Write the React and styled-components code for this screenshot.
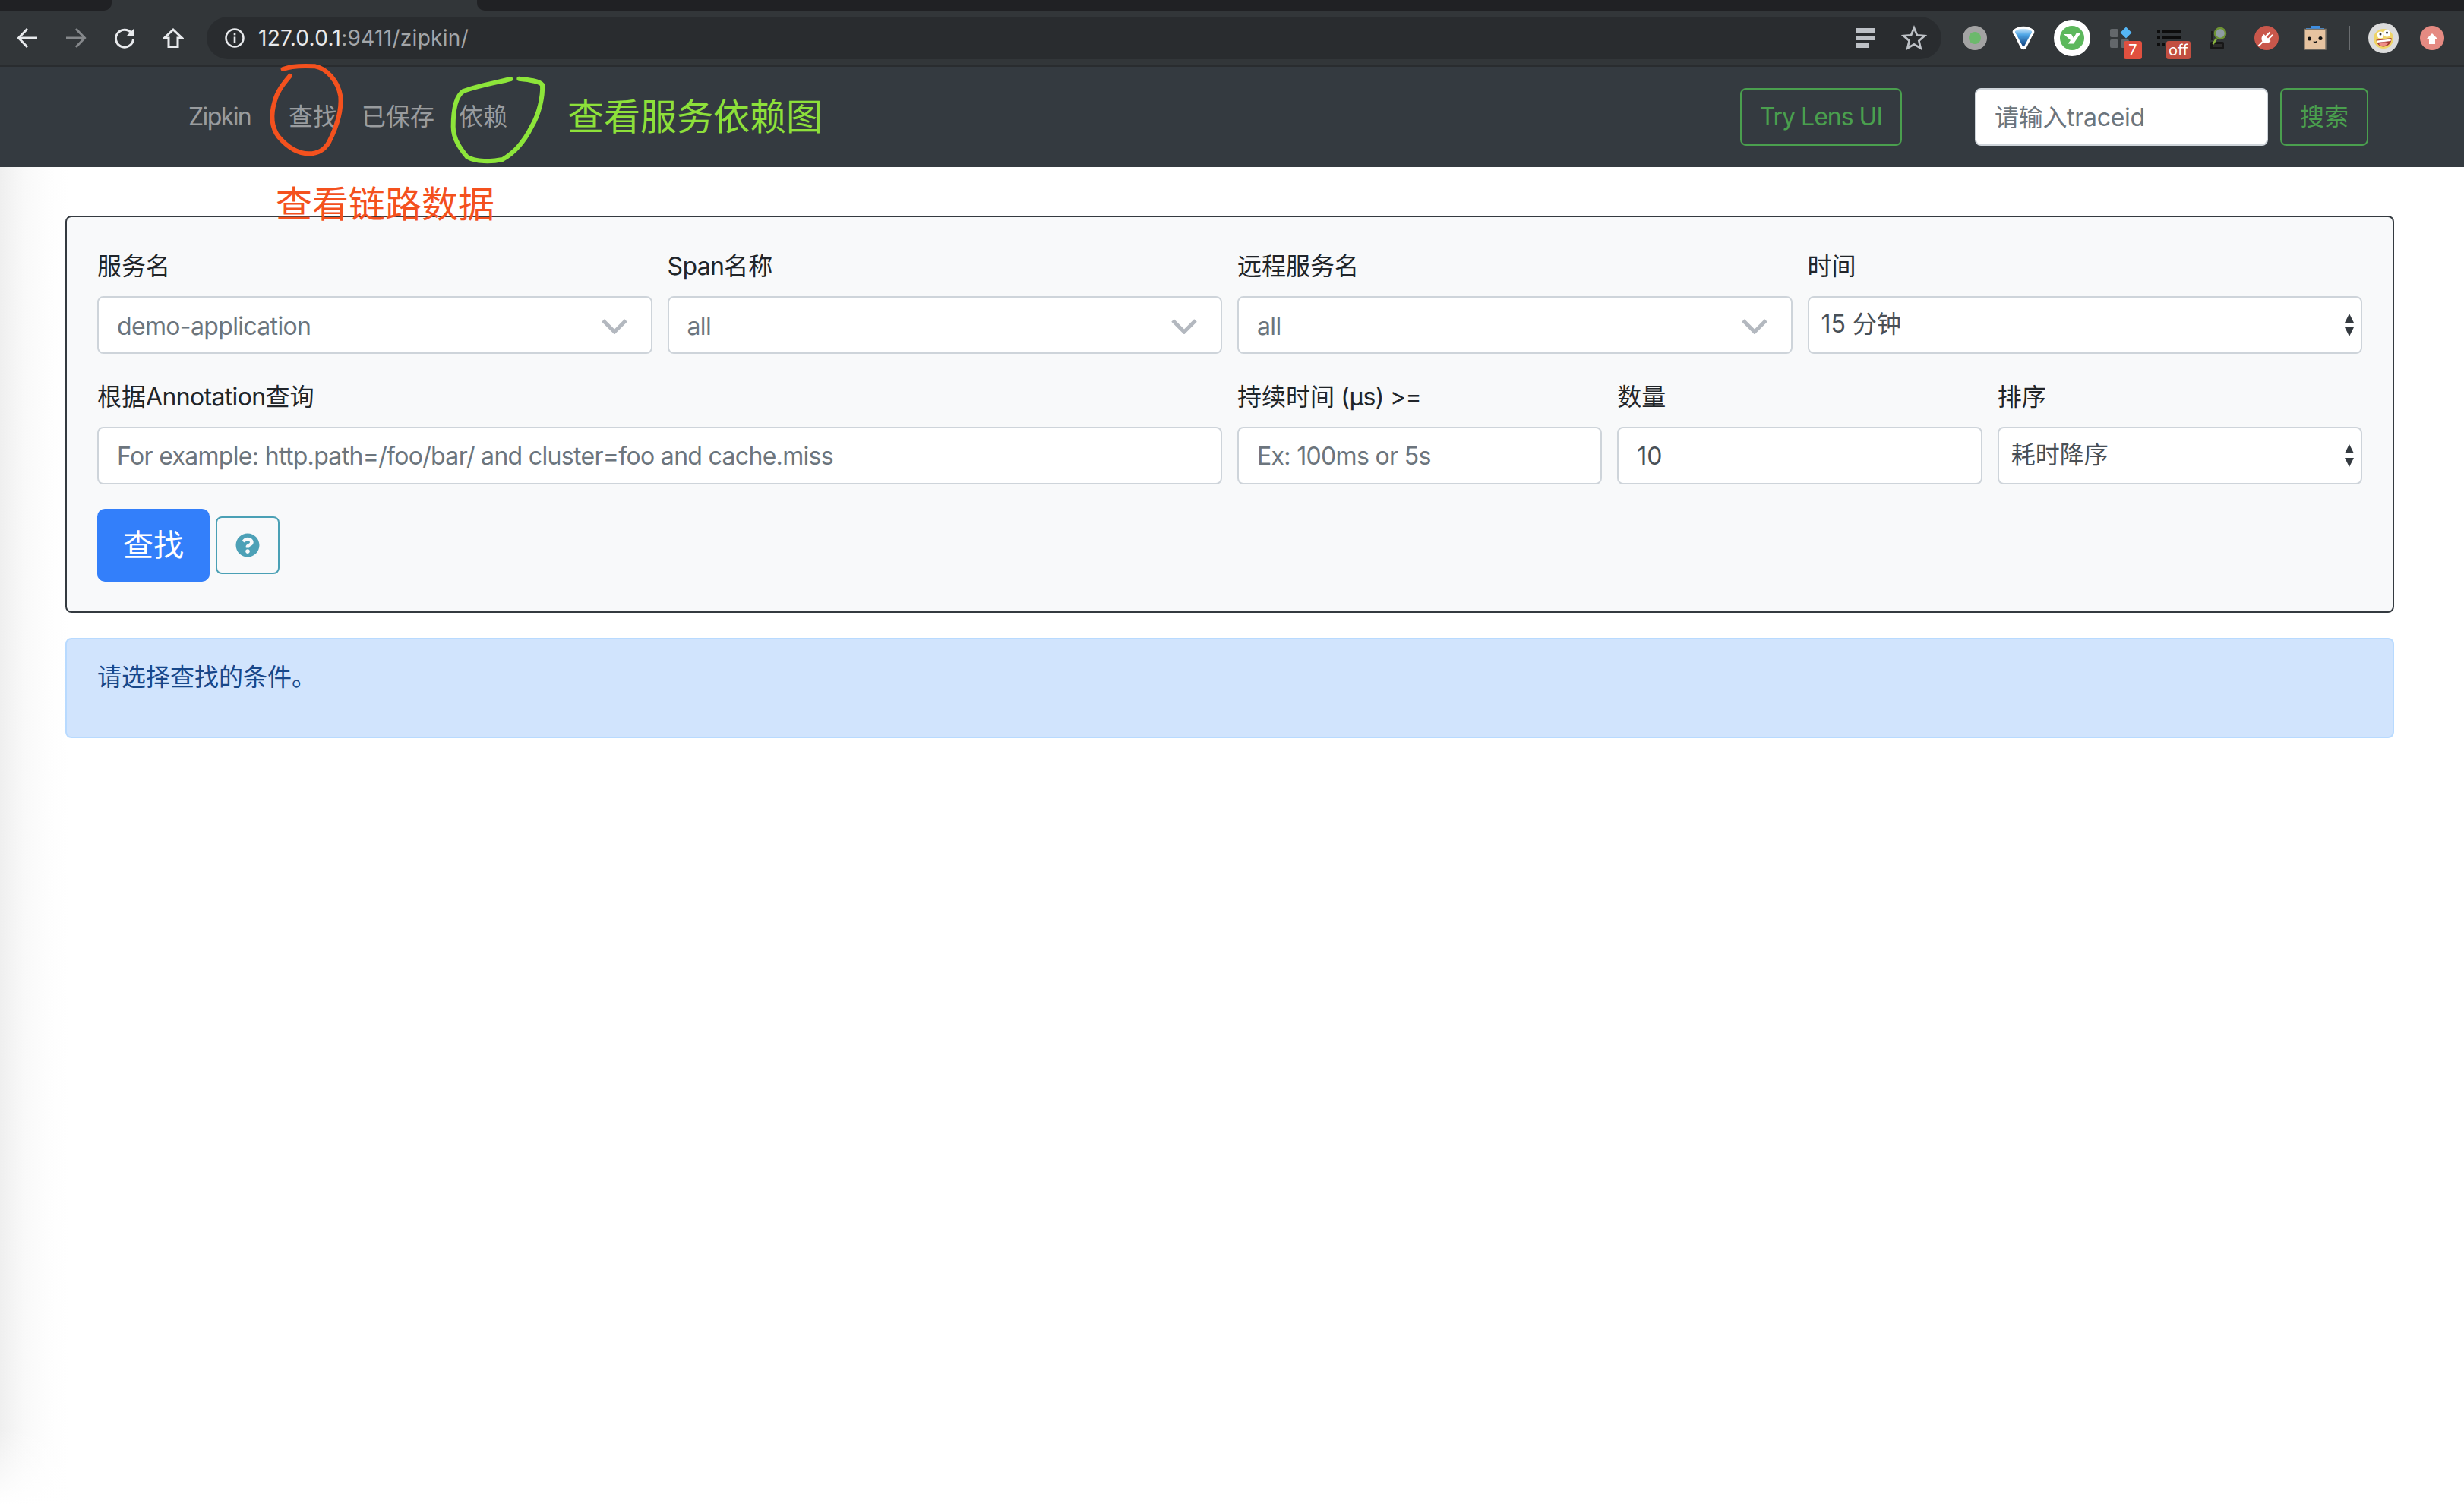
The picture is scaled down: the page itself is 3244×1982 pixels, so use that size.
import styled, { createGlobalStyle } from "styled-components";
import { FaQuestionCircle } from "react-icons/fa";

const FONT = `Inter, "Noto Sans CJK SC", sans-serif`;

const GlobalStyle = createGlobalStyle`
  html, body {
    margin: 0;
    padding: 0;
    background: #fff;
  }
  * {
    box-sizing: border-box;
  }
  body {
    font-family: ${FONT};
    font-size: 32px;
    line-height: 48px;
    color: #212529;
  }
`;

const Page = styled.div`
  position: relative;
  width: 3244px;
  height: 1982px;
  overflow: hidden;
  background:
    linear-gradient(to top, #fff 0, rgba(255, 255, 255, 0) 100px),
    linear-gradient(to right, #efefef 0, #f9f9f9 32px, #fdfdfd 62px, #fff 90px);
`;

// Inter runs wider than the reference font, only latin runs get tightened
const Latin = styled.span`
  letter-spacing: ${(p) => p.$spacing || -0.65}px;
`;

/* browser chrome */
const TabStrip = styled.div`
  display: flex;
  justify-content: space-between;
  height: 14px;
  background: #323639;
`;

const InactiveTab = styled.div`
  width: ${(p) => p.$w}px;
  background: #202124;
  border-radius: ${(p) => (p.$side === "left" ? "0 0 10px 0" : "0 0 0 10px")};
`;

const Toolbar = styled.div`
  display: flex;
  align-items: center;
  height: 74px;
  padding: 0 10px 0 4px;
  background: #323639;
  border-bottom: 2px solid #292c2f;
`;

const ChromeButton = styled.div`
  display: flex;
  align-items: center;
  justify-content: center;
  width: 64px;
  height: 56px;
`;

const AddressBar = styled.div`
  display: flex;
  align-items: center;
  flex: 1;
  height: 56px;
  margin: 0 12px;
  padding: 0 19px 0 24px;
  border-radius: 28px;
  background: #292c2f;
`;

const Url = styled.div`
  flex: 1;
  margin-left: 18px;
  font-size: 28px;
  line-height: 36px;
  letter-spacing: 0.3px;
  color: #a3a6a9;
  span {
    color: #e8eaed;
  }
`;

const OmniIcons = styled.div`
  display: flex;
  align-items: center;
  gap: 33px;
`;

const ExtensionSlot = styled.div`
  position: relative;
  display: flex;
  align-items: center;
  justify-content: center;
  width: 64px;
  height: 56px;
`;

const Badge = styled.div`
  position: absolute;
  top: 32px;
  right: 4px;
  width: ${(p) => p.$w}px;
  height: 24px;
  border-radius: 3px;
  background: ${(p) => p.$bg};
  font-size: 20px;
  line-height: 25px;
  text-align: center;
  color: #fff;
`;

const ToolbarDivider = styled.div`
  width: 2px;
  height: 32px;
  margin: 0 12px;
  background: #6a6d70;
`;

/* zipkin navbar */
const Navbar = styled.nav`
  display: flex;
  align-items: center;
  height: 132px;
  padding: 0 126px 0 248px;
  background: #343a40;
`;

const Brand = styled.div`
  width: 83px;
  margin-right: 33px;
  letter-spacing: -1.6px;
  color: rgba(255, 255, 255, 0.5);
`;

const NavLink = styled.div`
  padding: 0 16px;
  color: rgba(255, 255, 255, 0.5);
`;

const NavRight = styled.div`
  display: flex;
  align-items: center;
  margin-left: auto;
`;

const OutlineButton = styled.button`
  height: 76px;
  margin-left: ${(p) => p.$ml || 0}px;
  padding: 0 24px;
  border: 2px solid #4a9f4e;
  border-radius: 8px;
  background: transparent;
  font: 32px/48px ${FONT};
  white-space: nowrap;
  color: #4a9f4e;
`;

const TraceInput = styled.input`
  width: 386px;
  height: 76px;
  margin-left: 96px;
  padding: 12px 24px;
  border: 2px solid #ced4da;
  border-radius: 8px;
  background: #fff;
  font: 32px/48px ${FONT};
  letter-spacing: -0.3px;
  color: #495057;
  &::placeholder {
    color: #6c757d;
    opacity: 1;
  }
`;

/* search form */
const Main = styled.main`
  margin: 64px 92px 0 86px;
`;

const FormPanel = styled.form`
  height: 523px;
  padding: 40px;
  border: 2px solid #343a40;
  border-radius: 8px;
  background: #f8f9fa;
`;

const FormGrid = styled.div`
  display: grid;
  grid-template-columns: repeat(12, 1fr);
  column-gap: 20px;
  row-gap: 32px;
`;

const Field = styled.div`
  grid-column: span ${(p) => p.$span};
  min-width: 0;
`;

const Label = styled.label`
  display: block;
  height: 48px;
  margin-bottom: 16px;
  padding-top: 1px;
  line-height: 48px;
`;

const TextInput = styled.input`
  display: block;
  width: 100%;
  height: 76px;
  padding: 12px 24px;
  border: 2px solid #ced4da;
  border-radius: 8px;
  background: #fff;
  font: 32px/48px ${FONT};
  letter-spacing: ${(p) => (p.placeholder ? "-0.68px" : "0")};
  color: #495057;
  &::placeholder {
    color: #6c757d;
    opacity: 1;
  }
`;

const ComboBox = styled.div`
  display: flex;
  align-items: center;
  justify-content: space-between;
  height: 76px;
  padding: 3px 31px 0 24px;
  border: 2px solid #ced4da;
  border-radius: 8px;
  background: #fff;
  letter-spacing: -0.65px;
  color: #6c757d;
`;

const NativeSelectWrap = styled.div`
  position: relative;
  height: 76px;
`;

const NativeSelect = styled.select`
  display: block;
  width: 100%;
  height: 100%;
  padding: 0 40px 2px 16px;
  border: 2px solid #ced4da;
  border-radius: 8px;
  background: #fff;
  font: 32px/48px ${FONT};
  color: #495057;
  appearance: none;
`;

const SelectArrows = styled.svg`
  position: absolute;
  top: 23px;
  right: 10px;
  pointer-events: none;
`;

const ButtonRow = styled.div`
  display: flex;
  align-items: center;
  gap: 8px;
  margin-top: 32px;
`;

const SearchButton = styled.button`
  width: 148px;
  height: 96px;
  border: 0;
  border-radius: 10px;
  background: #337ffa;
  font: 40px/60px ${FONT};
  color: #fff;
`;

const HelpButton = styled.button`
  display: flex;
  align-items: center;
  justify-content: center;
  width: 84px;
  height: 76px;
  padding: 0;
  border: 2px solid #4aa0b5;
  border-radius: 8px;
  background: transparent;
  color: #4da1b7;
`;

const Alert = styled.div`
  height: 132px;
  margin-top: 33px;
  padding: 26px 40px 22px;
  border: 2px solid #b8daff;
  border-radius: 8px;
  background: #d1e4fd;
  color: #17478a;
`;

/* hand drawn notes lying over the screenshot */
const NotesLayer = styled.svg`
  position: absolute;
  top: 70px;
  left: 340px;
  pointer-events: none;
`;

const Note = styled.div`
  position: absolute;
  top: ${(p) => p.$top}px;
  left: ${(p) => p.$left}px;
  font-size: 48px;
  line-height: 60px;
  white-space: nowrap;
  color: ${(p) => p.$color};
`;

function BackArrow() {
  return (
    <svg width="28" height="28" viewBox="0 0 28 28" fill="none" stroke="#e8eaed" strokeWidth="3">
      <path d="M27 14H3M14 2 2.500 14 14 26" />
    </svg>
  );
}

function ForwardArrow() {
  return (
    <svg width="28" height="28" viewBox="0 0 28 28" fill="none" stroke="#85888b" strokeWidth="3">
      <path d="M1 14h24M14 2l11.500 12L14 26" />
    </svg>
  );
}

function ReloadIcon() {
  return (
    <svg width="28" height="28" viewBox="0 0 28 28" fill="none" stroke="#e8eaed" strokeWidth="3">
      <path d="M23 7.500A11.500 11.500 0 1 0 25.500 15" />
      <path d="M26 2v9h-9z" fill="#e8eaed" stroke="none" />
    </svg>
  );
}

function HomeIcon() {
  return (
    <svg width="28" height="28" viewBox="0 0 28 28" fill="none" stroke="#e8eaed" strokeWidth="3">
      <path d="M14 3 2.500 14H8v11.500h12V14h5.500z" />
    </svg>
  );
}

function InfoIcon() {
  return (
    <svg width="26" height="26" viewBox="0 0 26 26" fill="none">
      <circle cx="13" cy="13" r="11.500" stroke="#e8eaed" strokeWidth="2.500" />
      <rect x="11.700" y="11.500" width="2.600" height="8" fill="#e8eaed" />
      <rect x="11.700" y="6.500" width="2.600" height="2.800" fill="#e8eaed" />
    </svg>
  );
}

function ReaderIcon() {
  return (
    <svg width="26" height="26" viewBox="0 0 26 26" fill="#bdc1c6">
      <rect x="0" y="0" width="25" height="6" />
      <rect x="0" y="10" width="25" height="6" />
      <rect x="0" y="20" width="16" height="6" />
    </svg>
  );
}

function StarIcon() {
  return (
    <svg width="34" height="34" viewBox="0 0 32 32" fill="none" stroke="#bdc1c6" strokeWidth="2.600">
      <path d="M16 3.500 19.700 12.500 29 13.300 22 19.500 24.100 28.700 16 23.800 7.900 28.700 10 19.500 3 13.300 12.300 12.500z" />
    </svg>
  );
}

function DotExtension() {
  return (
    <svg width="32" height="32" viewBox="0 0 32 32">
      <circle cx="16" cy="16" r="16" fill="#a3a3a3" />
      <circle cx="16" cy="16" r="8" fill="#6cb96c" />
    </svg>
  );
}

function BalloonExtension() {
  return (
    <svg width="30" height="32" viewBox="0 0 30 32">
      <defs>
        <linearGradient id="balloon-fill" x1="0" y1="0" x2="0" y2="1">
          <stop offset="0" stopColor="#cfe9fb" />
          <stop offset="0.35" stopColor="#4fa6e6" />
          <stop offset="1" stopColor="#0f3f7c" />
        </linearGradient>
      </defs>
      <path d="M1.500 5.500C8 -1 22 -1 28.500 5.500 30.500 8 28.500 11 26.500 13.500L19 28.500C17 32 13 32 11 28.500L3.500 13.500C1.500 11 -.5 8 1.500 5.500z" fill="#fff" />
      <path d="M4 7C9 2.500 21 2.500 26 7 26.500 8.500 25.500 10 24 12L16.500 26C15.500 27.500 14.500 27.500 13.500 26L6 12C4.500 10 3.500 8.500 4 7z" fill="url(#balloon-fill)" />
    </svg>
  );
}

function YarnExtension() {
  return (
    <svg width="48" height="48" viewBox="0 0 48 48">
      <circle cx="24" cy="24" r="24" fill="#fff" />
      <circle cx="24" cy="24" r="16" fill="#5cb85c" />
      <path d="M13 19H23L26 24 29.500 18H35L26 31.500H18.500L22 27z" fill="#fff" />
    </svg>
  );
}

function TilesExtension() {
  return (
    <svg width="30" height="30" viewBox="0 0 30 30">
      <rect x="1" y="3" width="11" height="11" rx="2" fill="#63676b" />
      <rect x="1" y="17" width="11" height="11" rx="2" fill="#63676b" />
      <rect x="15" y="17" width="11" height="11" rx="2" fill="#63676b" />
      <path d="M22 .5 29.500 8 22 15.500 14.500 8z" fill="#55b6f5" />
    </svg>
  );
}

function ListExtension() {
  return (
    <svg width="32" height="20" viewBox="0 0 32 20" fill="#0d0d0d">
      <rect x="0" y="0" width="4" height="4" />
      <rect x="7" y="0" width="25" height="4" />
      <rect x="0" y="8" width="4" height="4" />
      <rect x="7" y="8" width="25" height="4" />
      <rect x="0" y="16" width="4" height="4" />
      <rect x="6" y="16" width="4" height="4" />
    </svg>
  );
}

function MagnifierExtension() {
  return (
    <svg width="24" height="30" viewBox="0 0 24 30">
      <path d="M3 6h3v12H3z" fill="#1d1d1d" />
      <rect x="2" y="20" width="18" height="10" rx="2" fill="#171717" />
      <rect x="5" y="23" width="12" height="4" fill="#2c2c2c" />
      <path d="M10 16 5.500 23" stroke="#8ab53f" strokeWidth="2.500" />
      <circle cx="15" cy="9" r="7" fill="#8f9ca3" stroke="#6d9233" strokeWidth="2.500" />
    </svg>
  );
}

function PlugExtension() {
  return (
    <svg width="32" height="32" viewBox="0 0 32 32">
      <circle cx="16" cy="16" r="16" fill="#c9574b" />
      <path d="M12.500 11 21.500 20C19 23 14 24 11 21 8.500 18.500 9 14 12.500 11z" fill="#fff" />
      <path d="M15.500 13.500 20 9M19 17l4.500-4.500M10.500 21.500 6 26" stroke="#fff" strokeWidth="2.200" strokeLinecap="round" />
    </svg>
  );
}

function NoteExtension() {
  return (
    <svg width="30" height="32" viewBox="0 0 30 32">
      <path d="M9 0H22V3H27V7H3V3H9z" fill="#3d8de0" />
      <rect x="1" y="4.500" width="28" height="26.500" fill="#e6c3a0" stroke="#7d7468" strokeWidth="1.500" />
      <circle cx="7.500" cy="17" r="2.500" fill="#111" />
      <circle cx="22" cy="16.500" r="2.500" fill="#111" />
      <path d="M13 20.500c1 1.500 3 1.500 4 0" fill="none" stroke="#111" strokeWidth="1.500" />
    </svg>
  );
}

function SmileyExtension() {
  return (
    <svg width="40" height="40" viewBox="0 0 40 40">
      <circle cx="20" cy="20" r="20" fill="#dcdcdc" />
      <circle cx="20" cy="21" r="13" fill="#efd468" />
      <circle cx="16" cy="16" r="4.500" fill="#fff" />
      <circle cx="24.500" cy="14" r="4.500" fill="#fff" />
      <circle cx="16" cy="15" r="1.500" fill="#333" />
      <circle cx="24.500" cy="13" r="1.500" fill="#333" />
      <path d="M10.500 22.500 30.500 20c.5 6-4 11-10 11.500-5 .5-9.500-3.500-10-9z" fill="#a63b33" />
      <path d="M14 28c3-3 9-3 12-1-2 4-10 4.500-12 1z" fill="#ef8d88" />
      <path d="M11.500 23.500 30 21.500 29.500 24 12 26z" fill="#fff" />
    </svg>
  );
}

function UpdateExtension() {
  return (
    <svg width="32" height="32" viewBox="0 0 32 32">
      <circle cx="16" cy="16" r="16" fill="#e58a82" />
      <path d="M16 10l8 8h-4v6h-8v-6H8z" fill="#fff" />
    </svg>
  );
}

function Chevron() {
  return (
    <svg width="34" height="20" viewBox="0 0 34 20" fill="none" stroke="#b3b8bf" strokeWidth="5">
      <path d="M2 2l15 15L32 2" />
    </svg>
  );
}

function Arrows() {
  return (
    <SelectArrows width="14" height="30" viewBox="0 0 14 30" fill="#343a40">
      <path d="M7 0l6 12H1z" />
      <path d="M7 30l6-12H1z" />
    </SelectArrows>
  );
}

function Combo({ value }) {
  return (
    <ComboBox>
      {value}
      <Chevron />
    </ComboBox>
  );
}

function SelectField({ value }) {
  return (
    <NativeSelectWrap>
      <NativeSelect defaultValue={value}>
        <option>{value}</option>
      </NativeSelect>
      <Arrows />
    </NativeSelectWrap>
  );
}

export default function App() {
  return (
    <Page>
      <GlobalStyle />
      <TabStrip>
        <InactiveTab $w={147} $side="left" />
        <InactiveTab $w={2616} $side="right" />
      </TabStrip>
      <Toolbar>
        <ChromeButton>
          <BackArrow />
        </ChromeButton>
        <ChromeButton>
          <ForwardArrow />
        </ChromeButton>
        <ChromeButton>
          <ReloadIcon />
        </ChromeButton>
        <ChromeButton>
          <HomeIcon />
        </ChromeButton>
        <AddressBar>
          <InfoIcon />
          <Url>
            <span>127.0.0.1</span>:9411/zipkin/
          </Url>
          <OmniIcons>
            <ReaderIcon />
            <StarIcon />
          </OmniIcons>
        </AddressBar>
        <ExtensionSlot>
          <DotExtension />
        </ExtensionSlot>
        <ExtensionSlot>
          <BalloonExtension />
        </ExtensionSlot>
        <ExtensionSlot>
          <YarnExtension />
        </ExtensionSlot>
        <ExtensionSlot>
          <TilesExtension />
          <Badge $w={24} $bg="#e0503f">
            7
          </Badge>
        </ExtensionSlot>
        <ExtensionSlot>
          <ListExtension />
          <Badge $w={32} $bg="#c24f41">
            off
          </Badge>
        </ExtensionSlot>
        <ExtensionSlot>
          <MagnifierExtension />
        </ExtensionSlot>
        <ExtensionSlot>
          <PlugExtension />
        </ExtensionSlot>
        <ExtensionSlot>
          <NoteExtension />
        </ExtensionSlot>
        <ToolbarDivider />
        <ExtensionSlot>
          <SmileyExtension />
        </ExtensionSlot>
        <ExtensionSlot>
          <UpdateExtension />
        </ExtensionSlot>
      </Toolbar>

      <Navbar>
        <Brand>Zipkin</Brand>
        <NavLink>查找</NavLink>
        <NavLink>已保存</NavLink>
        <NavLink>依赖</NavLink>
        <NavRight>
          <OutlineButton type="button">
            <Latin $spacing={-1}>Try Lens UI</Latin>
          </OutlineButton>
          <TraceInput placeholder="请输入traceid" />
          <OutlineButton type="button" $ml={16}>
            搜索
          </OutlineButton>
        </NavRight>
      </Navbar>

      <Main>
        <FormPanel>
          <FormGrid>
            <Field $span={3}>
              <Label>服务名</Label>
              <Combo value="demo-application" />
            </Field>
            <Field $span={3}>
              <Label>
                <Latin>Span</Latin>名称
              </Label>
              <Combo value="all" />
            </Field>
            <Field $span={3}>
              <Label>远程服务名</Label>
              <Combo value="all" />
            </Field>
            <Field $span={3}>
              <Label>时间</Label>
              <SelectField value="15 分钟" />
            </Field>
            <Field $span={6}>
              <Label>
                根据<Latin>Annotation</Latin>查询
              </Label>
              <TextInput placeholder="For example: http.path=/foo/bar/ and cluster=foo and cache.miss" />
            </Field>
            <Field $span={2}>
              <Label>
                持续时间<Latin> (μs) &gt;=</Latin>
              </Label>
              <TextInput placeholder="Ex: 100ms or 5s" />
            </Field>
            <Field $span={2}>
              <Label>数量</Label>
              <TextInput defaultValue="10" />
            </Field>
            <Field $span={2}>
              <Label>排序</Label>
              <SelectField value="耗时降序" />
            </Field>
          </FormGrid>
          <ButtonRow>
            <SearchButton type="button">查找</SearchButton>
            <HelpButton type="button">
              <FaQuestionCircle size={32} />
            </HelpButton>
          </ButtonRow>
        </FormPanel>
        <Alert>请选择查找的条件。</Alert>
      </Main>

      <NotesLayer width="400" height="150" viewBox="0 0 1200 450" fill="none" strokeWidth="18" strokeLinecap="round">
        <path
          stroke="#f4511e"
          d="M98 63C130 50 190 50 225 52C270 60 315 110 325 170C330 230 305 300 280 350C260 385 235 397 200 397C150 397 110 365 80 330C50 290 50 240 65 190C75 150 100 120 125 90"
        />
        <path
          stroke="#8de53a"
          d="M997 102C950 115 880 125 810 150C780 170 770 230 770 290C770 340 800 380 825 410C860 430 920 430 965 420C1010 395 1050 350 1080 290C1110 240 1125 170 1122 125C1110 110 1070 105 1030 101"
        />
      </NotesLayer>
      <Note $top={239} $left={363} $color="#f4511e">
        查看链路数据
      </Note>
      <Note $top={124} $left={747} $color="#8de03a">
        查看服务依赖图
      </Note>
    </Page>
  );
}
